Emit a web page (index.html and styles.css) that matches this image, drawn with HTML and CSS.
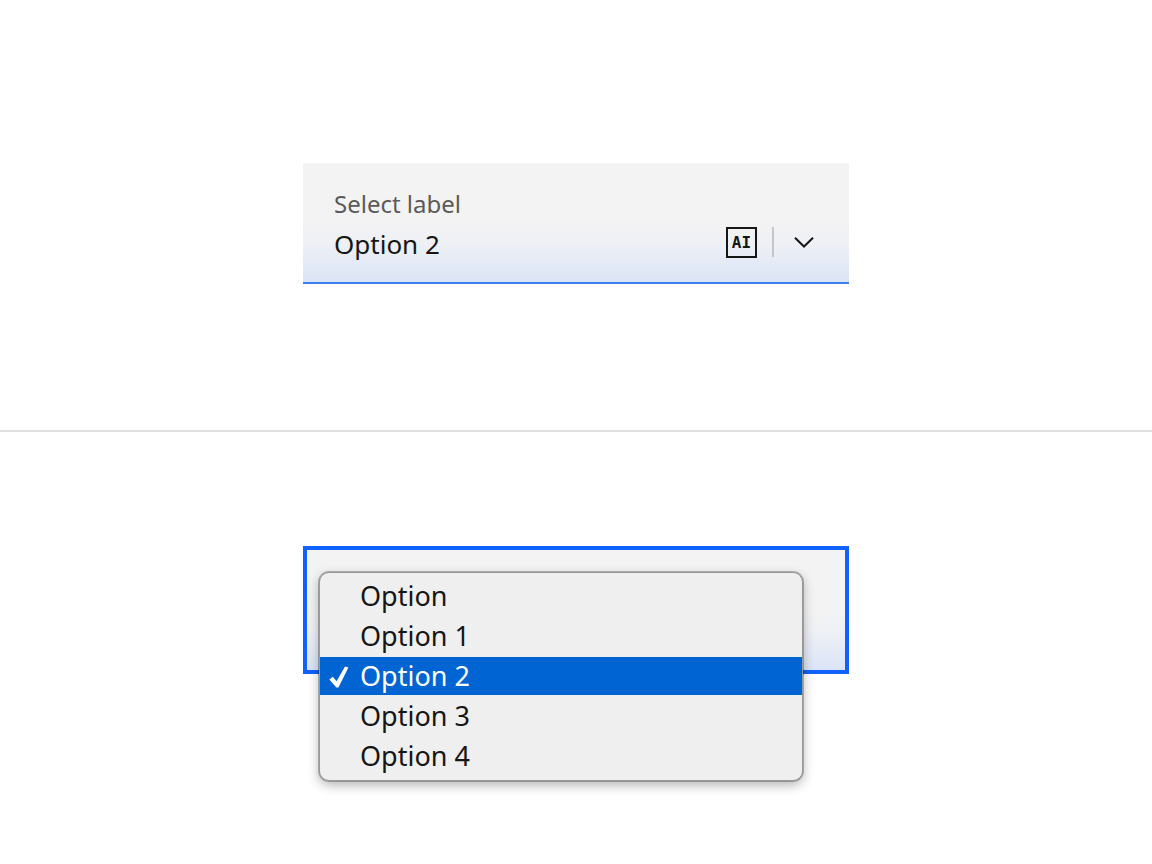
FILE: index.html
```html
<!DOCTYPE html>
<html lang="en">
<head>
    <meta charset="UTF-8">
    <meta name="viewport" content="width=device-width, initial-scale=1.0">
    <title>Fluid select</title>
    <link rel="stylesheet" href="styles.css">
</head>
<body>
    <section class="example">
        <div class="field">
            <label class="field-label" for="closedSelect">Select label</label>
            <div class="field-row">
                <select class="field-select" id="closedSelect">
                    <option>Option</option>
                    <option>Option 1</option>
                    <option selected>Option 2</option>
                    <option>Option 3</option>
                    <option>Option 4</option>
                </select>
                <button type="button" class="ai-label">AI</button>
                <span class="divider"></span>
                <svg class="chevron" viewBox="0 0 20 12" aria-hidden="true">
                    <path d="M1 1.7 L10 10.5 L19 1.7" />
                </svg>
            </div>
        </div>
    </section>

    <section class="example example-open">
        <div class="select-open">
            <button type="button" class="field-focus" aria-haspopup="listbox" aria-expanded="true" aria-label="Select label"></button>
            <ul class="menu" role="listbox" aria-label="Select label">
                <li role="presentation"><button type="button" class="menu-item" role="option">Option</button></li>
                <li role="presentation"><button type="button" class="menu-item" role="option">Option 1</button></li>
                <li role="presentation">
                    <button type="button" class="menu-item selected" role="option" aria-selected="true">
                        <svg class="check" viewBox="0 0 20 22" aria-hidden="true">
                            <path d="M0.3 13.5 L3.8 10.8 L7.6 15.3 L16 0.6 L19.4 1.6 L9.4 21.6 L7.4 21.6 Z" />
                        </svg>
                        Option 2
                    </button>
                </li>
                <li role="presentation"><button type="button" class="menu-item" role="option">Option 3</button></li>
                <li role="presentation"><button type="button" class="menu-item" role="option">Option 4</button></li>
            </ul>
        </div>
    </section>
</body>
</html>
```

FILE: styles.css
```css
/* General Styles */
* {
    box-sizing: border-box;
}
body {
    font-family: "Noto Sans", sans-serif;
    background-color: #ffffff;
    color: #161616;
    margin: 0;
    min-height: 100vh;
}
.example {
    padding: 163px 20px 146px;
}
.example-open {
    border-top: 2px solid #e0e0e0;
    padding: 114px 20px 190px;
}

/* Closed select */
.field {
    max-width: 546px;
    margin: auto;
    padding: 25px 34px 20px 31px;
    background: linear-gradient(to bottom, #f3f3f3 50%, #eef0f5 68%, #dbe4f6);
    border-bottom: 2px solid #3c7bf0;
}
.field-label {
    display: block;
    font-size: 24px;
    line-height: 32px;
    color: #5a5a5a;
}
.field-row {
    display: flex;
    align-items: center;
    height: 40px;
    margin-top: 2px;
}
.field-select {
    flex: 1;
    min-width: 0;
    appearance: none;
    padding: 4px 0 0;
    border: 0;
    background: none;
    font-family: inherit;
    font-size: 26px;
    line-height: 36px;
    color: #161616;
}
.ai-label {
    width: 31px;
    height: 31px;
    padding: 0;
    border: 2px solid #161616;
    background: none;
    font-family: "DejaVu Sans Mono", monospace;
    font-size: 16px;
    font-weight: bold;
    line-height: 28px;
    color: #161616;
    cursor: pointer;
}
.divider {
    width: 2px;
    height: 30px;
    margin: 0 20px 0 15px;
    background-color: #c6c6c6;
}
.chevron {
    width: 20px;
    height: 12px;
    margin-right: 1px;
    fill: none;
    stroke: #161616;
    stroke-width: 2;
}

/* Open select */
.select-open {
    position: relative;
    max-width: 546px;
    margin: auto;
}
.field-focus {
    display: block;
    width: 100%;
    height: 128px;
    border: 4px solid #0f62fe;
    background: linear-gradient(to bottom, #f3f3f3 50%, #eef0f5 68%, #dbe4f6);
}
.menu {
    position: absolute;
    top: 26px;
    left: 16px;
    right: 46px;
    display: flex;
    flex-direction: column;
    gap: 2px;
    margin: 0;
    padding: 4px 0 5px;
    list-style: none;
    background-color: #efefef;
    border: 1px solid #999999;
    border-radius: 10px;
    box-shadow: 0 0 0 1px rgba(0, 0, 0, 0.25), 0 4px 12px rgba(0, 0, 0, 0.3);
}
.menu-item {
    display: block;
    position: relative;
    width: 100%;
    height: 38px;
    padding: 0 0 0 40px;
    border: 0;
    background: none;
    font-family: inherit;
    font-size: 27px;
    line-height: 38px;
    text-align: left;
    color: #161616;
}
.menu-item.selected {
    background-color: #0064d2;
    color: #ffffff;
}
.check {
    position: absolute;
    top: 9px;
    left: 9px;
    width: 20px;
    height: 22px;
    fill: #ffffff;
}
```
